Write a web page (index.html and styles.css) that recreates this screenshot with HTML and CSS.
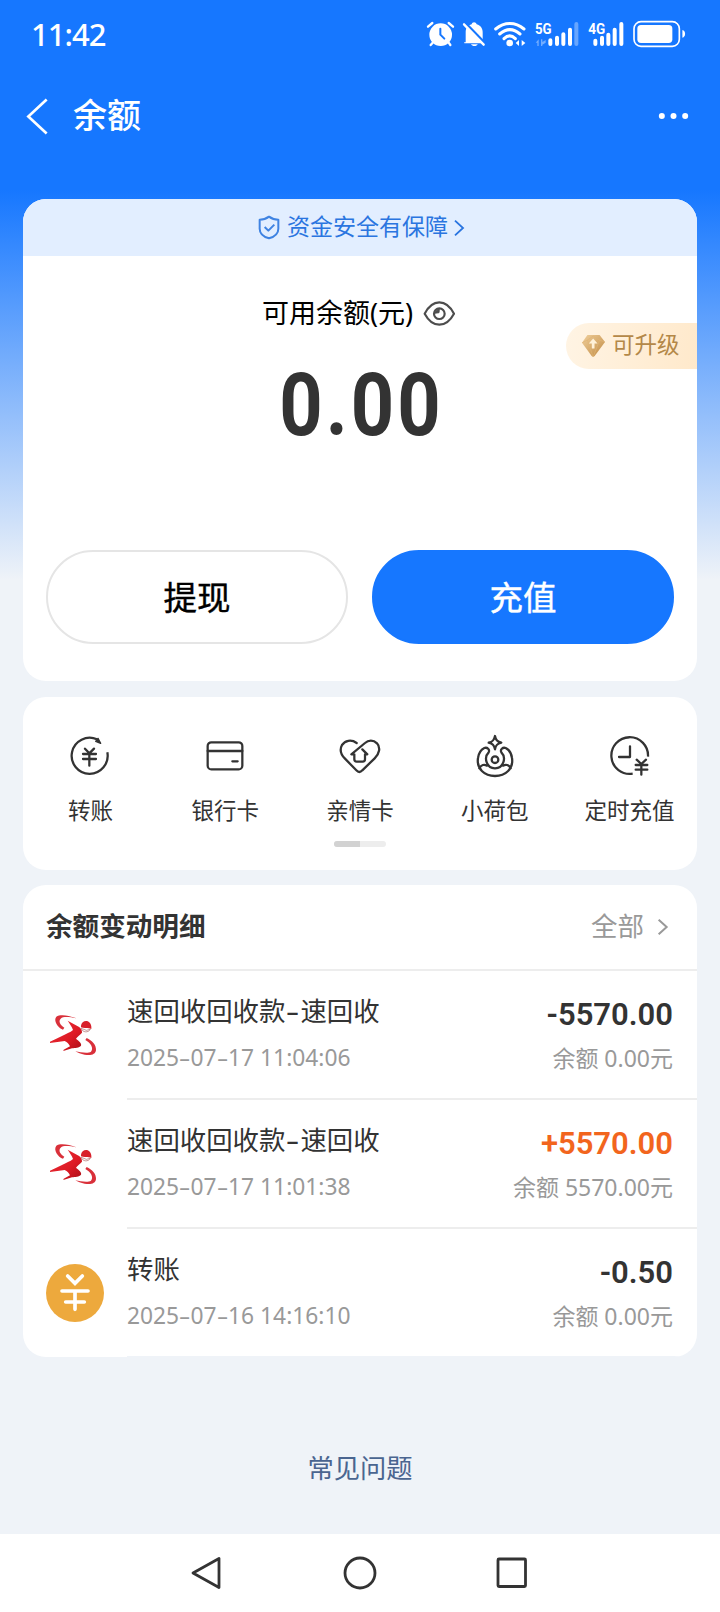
FILE: index.html
```html
<!DOCTYPE html>
<html lang="zh-CN">
<head>
<meta charset="utf-8">
<title>余额</title>
<link rel="stylesheet" href="styles.css">
</head>
<body>
<svg class="defs" width="0" height="0">
  <defs>
    <linearGradient id="red" x1="0" y1="0" x2="1" y2="1"><stop offset="0" stop-color="#e8303a"/><stop offset=".6" stop-color="#de1a24"/><stop offset="1" stop-color="#a80f18"/></linearGradient>
    <linearGradient id="gold" x1="0" y1="0" x2="1" y2="1"><stop offset="0" stop-color="#f0cf9c"/><stop offset="1" stop-color="#c08a42"/></linearGradient>
    <symbol id="runner" viewBox="138 378 174 174">
      <path fill="#d9303a" d="M229 415C205 405 180 402 169 410C159 422 174 445 189 449L193 443C181 436 174 424 182 416C190 409 208 411 229 415Z"/>
      <path fill="#d9303a" d="M260 474C276 481 289 495 288 510C287 524 272 527 254 524C243 522 233 518 226 514C242 517 264 521 273 515C282 505 272 488 256 480Z"/>
      <path fill="url(#red)" d="M203 422L236 440C242 443 247 451 246 458C241 465 232 469 228 476C237 483 246 490 243 497C237 504 226 503 216 505L190 513L191 509L210 499C207 492 202 486 194 483L150 489V485L186 468C198 462 211 457 219 450C216 440 208 430 203 422Z"/>
      <path fill="#d8202a" d="M243 437C244 428 252 422 260 423C270 425 276 435 274 447C264 441 252 446 243 442Z"/>
      <path fill="#fff" stroke="#8c3030" stroke-width="1.500" d="M244 445C247 458 265 459 271 448L259 451Z"/>
    </symbol>
  </defs>
</svg>
<div class="screen">
  <header class="top">
    <div class="status">
      <span class="clock">11:42</span>
      <svg class="status-icons" viewBox="50 60 785 84" fill="#fff">
        <circle cx="94" cy="104" r="34"/>
        <path d="M56 80L69 69M131 80L118 69M70 128L64 135M118 128L123 135" stroke="#fff" stroke-width="7" stroke-linecap="round"/>
        <path d="M93 86V104L105 116" fill="none" stroke="#1677ff" stroke-width="6" stroke-linecap="round"/>
        <path d="M169 127V97C169 84 176 76 187 73C188 65 200 65 202 73C214 77 220 85 220 98V118L225 126V130H165V126ZM185 133H205C203 140 188 140 185 133Z"/>
        <path d="M170 71L229 132" stroke="#1677ff" stroke-width="8"/><path d="M164 73L223 134" stroke="#fff" stroke-width="7" stroke-linecap="round"/>
        <path d="M259 87C285 65 318 65 344 87M271 102C291 85 312 85 332 102M284 116C295 105 307 105 318 116" fill="none" stroke="#fff" stroke-width="9" stroke-linecap="round"/>
        <circle cx="301" cy="129" r="10"/>
        <path d="M329 120V138L319 129ZM337 120V138L348 129Z"/>
        <g font-family="Roboto" font-weight="700" font-size="46"><text x="377" y="101" textLength="50" lengthAdjust="spacingAndGlyphs">5G</text><text x="537" y="101" textLength="51" lengthAdjust="spacingAndGlyphs">4G</text></g>
        <path opacity=".4" d="M388 118V138H384V128H379ZM395 118H399V126L409 120V128L399 134V138H395Z"/>
        <g fill="none" stroke="#fff" stroke-width="12" stroke-linecap="round"><path d="M423 121V132M443 113V132M462 103V132M482 89V132M558 122V132M578 113V132M597 104V132M616 89V132M636 72V132"/><path opacity=".35" d="M501 72V132"/></g>
        <rect x="674" y="65" width="136" height="74" rx="21" fill="none" stroke="#fff" stroke-width="5"/>
        <rect x="684" y="75" width="105" height="54" rx="11"/><path d="M819 90C830 91 830 112 819 113Z"/>
      </svg>
    </div>
    <div class="titlebar">
      <svg class="back" viewBox="80 294 66 110"><path d="M142 298L87 349L142 400" fill="none" stroke="#fff" stroke-width="8"/></svg>
      <h1 class="title">余额</h1>
      <svg class="more" viewBox="746 336 92 24" fill="#fff"><circle cx="757" cy="348" r="9"/><circle cx="792" cy="348" r="9"/><circle cx="827" cy="348" r="9"/></svg>
    </div>
  </header>

  <main class="cards">
    <section class="card balance">
      <div class="safety">
        <svg class="shield" viewBox="774 105 66 75" fill="none" stroke="#3f83e2" stroke-width="6" stroke-linejoin="round"><path d="M807 110C799 116 789 119 779 119V146C779 160 790 170 807 175C824 170 835 160 835 146V119C825 119 815 116 807 110Z"/><path d="M794 141L805 152L823 134"/></svg>
        <span class="safety-text">资金安全有保障</span>
        <svg class="safety-arrow" viewBox="280 116 36 54"><path d="M286 121L310 143L286 165" fill="none" stroke="#2a75e0" stroke-width="5.500"/></svg>
      </div>
      <div class="avail">
        <span>可用余额(元)</span>
        <svg class="eye" viewBox="192 360 99 81" fill="none" stroke="#4d4d4d" stroke-width="6.500"><path d="M197 401C210 376 226 367 241 367C257 367 272 376 285 401C272 425 257 434 241 434C226 434 210 425 197 401Z" stroke-linejoin="round"/><circle cx="241" cy="401" r="16"/><path d="M225 400L240 398L241 384Z" fill="#4d4d4d" stroke-width="3"/></svg>
      </div>
      <div class="amount-wrap"><span class="amount">0.00</span></div>
      <a class="upgrade">
        <svg class="gem" viewBox="665 462 74 68"><path d="M684 465H720L736 486L706 526Q701 531 696 526L668 488Z" fill="url(#gold)"/><path d="M668 488L684 480L701 530L720 480L736 486M684 480L701 468L720 480" fill="none" stroke="#dfb575" stroke-width="2"/><path d="M701 475L714 490H705V505H697V490H688Z" fill="#fff1d8"/></svg>
        <span class="upgrade-text">可升级</span>
      </a>
      <div class="buttons"><button class="btn">提现</button><button class="btn primary">充值</button></div>
    </section>

    <section class="card services">
      <div class="grid">
        <div class="item"><svg viewBox="147 132 132 132" class="ico"><path d="M234 148A54 54 0 1 0 265 187" stroke-linecap="butt"/><path d="M237 145L245 160L230 154Z" fill="#333" stroke-width="4"/><path d="M198 176L211 190L225 176M211 190V227M192 192H231M192 207H231"/></svg><span>转账</span></div>
        <div class="item"><svg viewBox="549 133 132 132" class="ico"><rect x="563" y="158" width="104" height="81" rx="11"/><path d="M563 184H667M637 215H653"/></svg><span>银行卡</span></div>
        <div class="item"><svg viewBox="954 129 132 132" class="ico"><path d="M1010 156C993 144 975 149 966 162C957 179 965 193 975 203L1009 238Q1018 248 1027 238L1064 202C1079 187 1082 169 1071 157C1060 146 1045 147 1035 156L994 190H1003V205Q1003 212 1010 212H1028Q1035 212 1035 205V190H1042L1027 175"/></svg><span>亲情卡</span></div>
        <div class="item"><svg viewBox="309 132 132 132" class="ico"><path d="M375 138C377 151 382 156 394 158C382 161 377 165 375 178C372 165 368 161 356 158C368 156 372 151 375 138Z"/><circle cx="375" cy="209" r="10"/><path d="M356 187C360 179 352 171 343 174C333 179 326 189 324 204C319 236 343 258 375 258C407 258 431 236 426 204C424 189 417 179 407 174C398 171 390 179 394 187C410 203 400 235 375 235C350 235 340 203 356 187ZM328 235C333 224 343 222 351 227M422 235C417 224 407 222 399 227"/></svg><span>小荷包</span></div>
        <div class="item"><svg viewBox="714 132 132 132" class="ico"><path d="M834 200A55 55 0 1 0 788 251" stroke-linecap="butt"/><path d="M780 169V201H747"/><path d="M800 209L814 222L828 209M814 222V254M797 225H832M797 239H832"/></svg><span>定时充值</span></div>
      </div>
      <div class="pager"><i class="pager-on"></i></div>
    </section>

    <section class="card detail">
      <div class="detail-head"><h2 class="detail-title">余额变动明细</h2><span class="all">全部</span><svg class="all-arrow" viewBox="892 116 36 54"><path d="M897 121L921 143L897 165" fill="none" stroke="#999" stroke-width="6"/></svg></div>
      <div class="row">
        <svg class="logo"><use href="#runner"/></svg>
        <div class="body"><div class="info"><b class="name">速回收回收款<i class="dash">-</i>速回收</b><span class="date">2025<i class="dash">-</i>07<i class="dash">-</i>17 11:04:06</span></div><div class="nums"><span class="sum">-5570.00</span><span class="rest">余额 0.00元</span></div></div>
      </div>
      <div class="row">
        <svg class="logo"><use href="#runner"/></svg>
        <div class="body"><div class="info"><b class="name">速回收回收款<i class="dash">-</i>速回收</b><span class="date">2025<i class="dash">-</i>07<i class="dash">-</i>17 11:01:38</span></div><div class="nums"><span class="sum plus">+5570.00</span><span class="rest">余额 5570.00元</span></div></div>
      </div>
      <div class="row">
        <svg class="logo" viewBox="138 462 174 174"><circle cx="225" cy="549" r="87" fill="#eda93d"/><path d="M203 498L225 520L247 498M186 543H264M197 576H253M225 543V598" fill="none" stroke="#fff" stroke-width="11" stroke-linecap="round"/></svg>
        <div class="body"><div class="info"><b class="name">转账</b><span class="date">2025<i class="dash">-</i>07<i class="dash">-</i>16 14:16:10</span></div><div class="nums"><span class="sum">-0.50</span><span class="rest">余额 0.00元</span></div></div>
      </div>
    </section>
  </main>
  <a class="faq">常见问题</a>
  <nav class="nav">
    <svg class="nav-ico" viewBox="0 0 36 36"><path d="M29 3.500V32.500L3 18Z"/></svg>
    <svg class="nav-ico" viewBox="0 0 36 36"><circle cx="18" cy="18" r="15"/></svg>
    <svg class="nav-ico" viewBox="0 0 36 36"><rect x="4" y="4" width="27.500" height="27.500" rx="1"/></svg>
  </nav>
</div>
</body>
</html>
```
FILE: styles.css
```css
* { box-sizing: border-box; }
body { margin: 0; font-family: "Noto Sans", "Noto Sans CJK SC", sans-serif; color: #333; }
svg { display: block; flex: none; }
h1, h2 { margin: 0; }
.defs { position: absolute; }
.screen {
  width: 720px; height: 1612px; display: flex; flex-direction: column; overflow: hidden;
  background: linear-gradient(#1677ff 0, #1677ff 190px, #eff3f8 580px);
}
.top { height: 199px; flex: none; color: #fff; }
.status { height: 68px; display: flex; align-items: center; justify-content: space-between; padding: 0 32px 0 31px; }
.clock { font-size: 31px; font-weight: 500; line-height: 40px; letter-spacing: -1px; margin-top: -1px; }
.status-icons { width: 261.7px; height: 28px; }
.titlebar { height: 96px; display: flex; align-items: center; padding: 0 31px 0 26px; }
.back { width: 22px; height: 37px; }
.title { font-size: 34px; line-height: 50px; font-weight: 500; margin: -2px auto 0 25px; }
.more { width: 31px; height: 8px; }

.cards { display: flex; flex-direction: column; padding: 0 23px; flex: none; }
.card { background: #fff; border-radius: 23px; overflow: hidden; }
.balance { height: 482px; position: relative; margin-bottom: 16px; }
.safety { height: 57px; background: #e2eeff; color: #2a75e0; display: flex; align-items: center; padding-left: 235px; }
.shield { width: 22px; height: 25px; }
.safety-text { font-size: 23px; line-height: 34px; margin: -4px 5px 0 7px; }
.safety-arrow { width: 12px; height: 18px; }
.avail { display: flex; align-items: center; height: 36px; margin-top: 39px; padding-left: 239px; font-size: 27px; line-height: 36px; color: #000; }
.eye { width: 33px; height: 27px; margin-left: 10px; }
.amount-wrap { display: flex; justify-content: center; height: 90px; margin-top: 29px; }
.amount { font-family: Roboto, sans-serif; font-weight: 700; font-size: 87px; line-height: 90px; letter-spacing: 3.5px; transform: scaleX(.87); margin-right: -3px; }
.upgrade {
  position: absolute; right: 0; top: 124px; width: 131px; height: 46px; border-radius: 23px 0 0 23px;
  background: linear-gradient(100deg, #fff4e4, #ffe9cb); display: flex; align-items: center; gap: 6px; padding-left: 15px;
  color: #b48848; font-size: 22.5px; line-height: 34px;
}
.upgrade-text { margin-top: -3px; }
.gem { width: 25px; height: 23px; margin-top: -2px; }
.buttons { display: flex; gap: 24px; padding: 0 23px; margin-top: 100px; }
.btn { flex: 1; height: 94px; border-radius: 47px; border: 2px solid #e5e5e5; background: #fff; color: #000; font: 400 33.5px/50px "Noto Sans CJK SC", sans-serif; -webkit-text-stroke: .4px currentColor; padding: 0 0 2px; }
.primary { background: #1677ff; border-color: #1677ff; color: #fff; }

.services { height: 173px; margin-bottom: 15px; display: flex; flex-direction: column; align-items: center; }
.grid { display: grid; grid-template-columns: repeat(5, 1fr); width: 100%; padding-top: 37px; height: 144px; }
.item { display: flex; flex-direction: column; align-items: center; gap: 16px; font-size: 22.5px; line-height: 34px; white-space: nowrap; }
.ico { width: 44px; height: 44px; fill: none; stroke: #333; stroke-width: 6.8; stroke-linecap: round; stroke-linejoin: round; }
.pager { width: 52px; height: 6px; border-radius: 3px; background: #ededed; overflow: hidden; display: flex; }
.pager-on { width: 26px; background: #d2d2d2; }

.detail { height: 472px; }
.detail-head { height: 86px; border-bottom: 2px solid #ededed; display: flex; align-items: center; padding: 0 28px 0 23px; }
.detail-title { font-size: 26.6px; line-height: 40px; font-weight: 700; margin-top: -3px; }
.all { margin: -3px 13px 0 auto; font-size: 26.5px; line-height: 40px; color: #999; }
.all-arrow { width: 12px; height: 18px; }
.row { height: 129px; display: flex; align-items: center; padding-left: 23px; }
.logo { width: 58px; height: 58px; margin: -2px 23px 0 0; }
.body { flex: 1; height: 129px; border-bottom: 2px solid #ededed; display: flex; justify-content: space-between; padding: 20px 24px 0 0; }
.row:last-child .body { border-color: #eff3f8; }
.info, .nums { display: flex; flex-direction: column; }
.nums { align-items: flex-end; }
.name { font-weight: 400; font-size: 26.4px; line-height: 40px; white-space: nowrap; }
.dash { display: inline-block; width: .57em; text-align: center; font-style: normal; transform: scaleX(1.6); }
.date { color: #999; font-size: 22.8px; line-height: 34px; margin-top: 10px; white-space: nowrap; }
.date .dash { width: .5em; }
.sum { font-family: Roboto, sans-serif; font-weight: 600; font-size: 31px; line-height: 40px; margin-top: 4px; }
.plus { color: #f2651d; }
.rest { color: #999; font-size: 23px; line-height: 34px; margin-top: 6px; }

.faq { color: #4a6590; font-size: 26.3px; line-height: 40px; text-align: center; margin-top: 91px; }
.nav { margin-top: auto; height: 78px; background: #fff; display: flex; justify-content: center; align-items: center; gap: 116px; }
.nav-ico { width: 36px; height: 36px; fill: none; stroke: #333; stroke-width: 2.800; stroke-linejoin: round; }
```
